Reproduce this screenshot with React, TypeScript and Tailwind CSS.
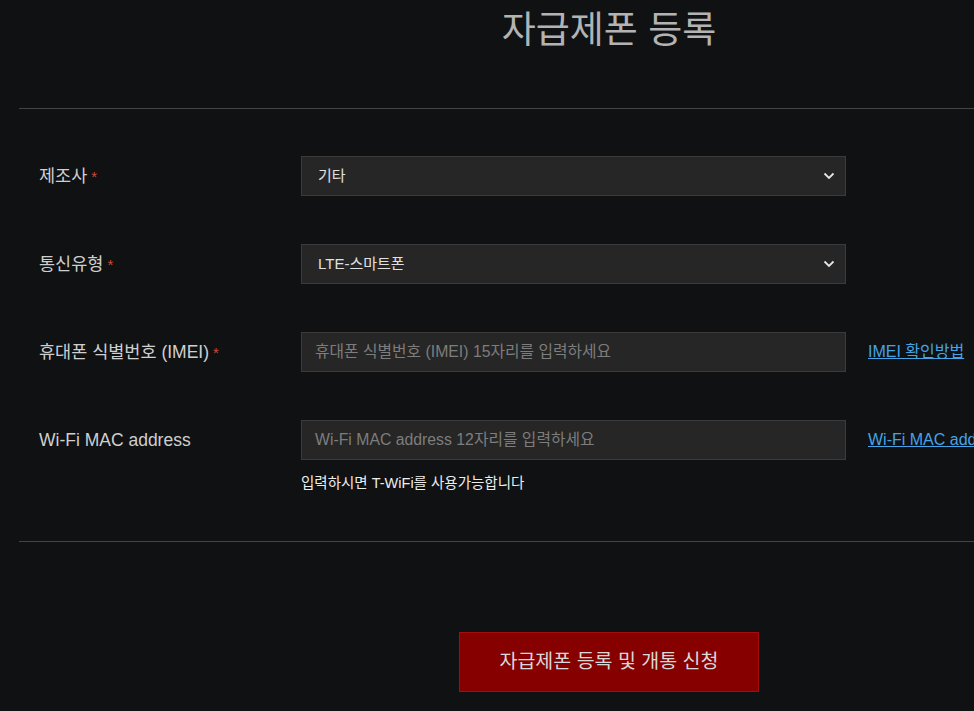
import React from "react";

const font = { fontFamily: '"Liberation Sans", "Noto Sans CJK KR", sans-serif' };

function Chevron() {
  return (
    <svg width="12" height="8" viewBox="0 0 12 8" className="absolute right-[10px] top-1/2 -translate-y-1/2">
      <path d="M1.5 1.5 L6 6 L10.5 1.5" fill="none" stroke="#e5e5e5" strokeWidth="1.8" />
    </svg>
  );
}

function Label({ text, req }: { text: string; req?: boolean }) {
  return (
    <div className="w-[282px] shrink-0 h-[40px] flex items-center text-[17.5px] text-[#cfcfcf] pl-[20px]">
      <span>{text}</span>
      {req && <span className="text-[15px] text-[#d24a33] ml-[4px] mt-[3px]">*</span>}
    </div>
  );
}

function Select({ value }: { value: string }) {
  return (
    <div className="relative w-[545px] shrink-0 h-[40px] bg-[#262626] border border-[#3b3b3b] flex items-center pl-[16px] text-[15px] text-[#e0e0e0]">
      {value}
      <Chevron />
    </div>
  );
}

function Input({ placeholder }: { placeholder: string }) {
  return (
    <div className="w-[545px] shrink-0 h-[40px] bg-[#262626] border border-[#3b3b3b] flex items-center pl-[13px] text-[15.8px] text-[#7d7d7d]">
      {placeholder}
    </div>
  );
}

export default function App() {
  return (
    <div className="w-screen h-[711px] overflow-hidden bg-[#0f1113]" style={font}>
      <div className="ml-[19px] w-[1180px]">
        <div className="h-[109px] border-b border-[#444] flex justify-center">
          <h1 className="text-[37px] leading-[44px] pt-[9px] text-[#b3b3b3] font-normal">자급제폰 등록</h1>
        </div>
        <div className="pt-[47px] pb-[48px] border-b border-[#444] flex flex-col gap-[48px]">
          <div className="flex">
            <Label text="제조사" req />
            <Select value="기타" />
          </div>
          <div className="flex">
            <Label text="통신유형" req />
            <Select value="LTE-스마트폰" />
          </div>
          <div className="flex">
            <Label text="휴대폰 식별번호 (IMEI)" req />
            <Input placeholder="휴대폰 식별번호 (IMEI) 15자리를 입력하세요" />
            <div className="h-[40px] flex items-center ml-[22px]">
              <a className="text-[16px] text-[#46a3e6] underline whitespace-nowrap">IMEI 확인방법</a>
            </div>
          </div>
          <div className="flex">
            <Label text="Wi-Fi MAC address" />
            <div className="flex flex-col shrink-0">
              <Input placeholder="Wi-Fi MAC address 12자리를 입력하세요" />
              <div className="text-[14.5px] text-[#ededed] mt-[13px] leading-[20px]">입력하시면 T-WiFi를 사용가능합니다</div>
            </div>
            <div className="h-[40px] flex items-center ml-[22px]">
              <a className="text-[16px] text-[#46a3e6] underline whitespace-nowrap">Wi-Fi MAC address 확인방법</a>
            </div>
          </div>
        </div>
        <div className="flex justify-center pt-[90px]">
          <button className="w-[300px] h-[60px] bg-[#870000] border border-[#a30d0d] text-[19.5px] text-[#d9d9d9]">
            자급제폰 등록 및 개통 신청
          </button>
        </div>
      </div>
    </div>
  );
}
